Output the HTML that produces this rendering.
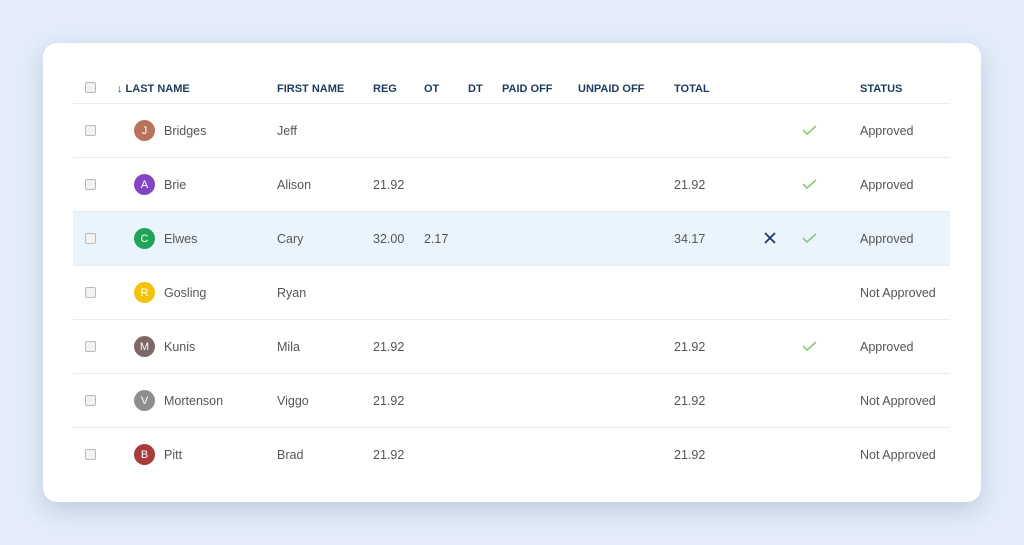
<!DOCTYPE html>
<html><head><meta charset="utf-8"><style>
body{margin:0;width:1024px;height:545px;background:#e4edf9;font-family:"Liberation Sans",sans-serif;position:relative;overflow:hidden}
.card{position:absolute;left:43px;top:43px;width:938px;height:459px;background:#fff;border-radius:14px;box-shadow:0 8px 24px rgba(120,140,170,.35)}
.a{position:absolute;white-space:nowrap}
.h{font-size:11px;font-weight:bold;color:#1d3a5f;top:83px}
.t{font-size:12.5px;color:#555;margin-top:1px}
.line{position:absolute;left:73px;width:877px;height:1px;background:#ebebeb}
.cb{position:absolute;left:85px;width:9px;height:9px;border:1px solid #bbb;border-radius:2px;background:#f2f2f2}
.av{position:absolute;left:134px;width:21px;height:21px;border-radius:50%;color:#fff;font-size:11px;text-align:center;line-height:23px}
</style></head><body>
<div class="card"></div>
<div class="a" style="left:73px;top:212px;width:877px;height:53px;background:#e9f4fd"></div>
<div class="cb" style="top:82px"></div>
<div class="a h" style="left:117px">↓ LAST NAME</div>
<div class="a h" style="left:277px">FIRST NAME</div>
<div class="a h" style="left:373px">REG</div>
<div class="a h" style="left:424px">OT</div>
<div class="a h" style="left:468px">DT</div>
<div class="a h" style="left:502px">PAID OFF</div>
<div class="a h" style="left:578px">UNPAID OFF</div>
<div class="a h" style="left:674px">TOTAL</div>
<div class="a h" style="left:860px">STATUS</div>
<div class="line" style="top:103px"></div><div class="line" style="top:157px"></div><div class="line" style="top:211px"></div><div class="line" style="top:265px"></div><div class="line" style="top:319px"></div><div class="line" style="top:373px"></div><div class="line" style="top:427px"></div>

<div class="cb" style="top:125px"></div><div class="av" style="top:120px;background:#b8735a">J</div><div class="a t" style="left:164px;top:123px">Bridges</div><div class="a t" style="left:277px;top:123px">Jeff</div><div class="a t" style="left:860px;top:123px">Approved</div>
<div class="cb" style="top:179px"></div><div class="av" style="top:174px;background:#8246c4">A</div><div class="a t" style="left:164px;top:177px">Brie</div><div class="a t" style="left:277px;top:177px">Alison</div><div class="a t" style="left:373px;top:177px">21.92</div><div class="a t" style="left:674px;top:177px">21.92</div><div class="a t" style="left:860px;top:177px">Approved</div>
<div class="cb" style="top:233px"></div><div class="av" style="top:228px;background:#22a35a">C</div><div class="a t" style="left:164px;top:231px">Elwes</div><div class="a t" style="left:277px;top:231px">Cary</div><div class="a t" style="left:373px;top:231px">32.00</div><div class="a t" style="left:424px;top:231px">2.17</div><div class="a t" style="left:674px;top:231px">34.17</div><div class="a t" style="left:860px;top:231px">Approved</div>
<div class="cb" style="top:287px"></div><div class="av" style="top:282px;background:#f4c20d">R</div><div class="a t" style="left:164px;top:285px">Gosling</div><div class="a t" style="left:277px;top:285px">Ryan</div><div class="a t" style="left:860px;top:285px">Not Approved</div>
<div class="cb" style="top:341px"></div><div class="av" style="top:336px;background:#7d6767">M</div><div class="a t" style="left:164px;top:339px">Kunis</div><div class="a t" style="left:277px;top:339px">Mila</div><div class="a t" style="left:373px;top:339px">21.92</div><div class="a t" style="left:674px;top:339px">21.92</div><div class="a t" style="left:860px;top:339px">Approved</div>
<div class="cb" style="top:395px"></div><div class="av" style="top:390px;background:#8e8e8e">V</div><div class="a t" style="left:164px;top:393px">Mortenson</div><div class="a t" style="left:277px;top:393px">Viggo</div><div class="a t" style="left:373px;top:393px">21.92</div><div class="a t" style="left:674px;top:393px">21.92</div><div class="a t" style="left:860px;top:393px">Not Approved</div>
<div class="cb" style="top:449px"></div><div class="av" style="top:444px;background:#a53d3a">B</div><div class="a t" style="left:164px;top:447px">Pitt</div><div class="a t" style="left:277px;top:447px">Brad</div><div class="a t" style="left:373px;top:447px">21.92</div><div class="a t" style="left:674px;top:447px">21.92</div><div class="a t" style="left:860px;top:447px">Not Approved</div>

<svg class="a" style="left:0;top:0" width="1024" height="545">
<g fill="none" stroke="#8cc97a" stroke-width="1.6">
<path d="M803 130l4 4 9-8"/><path d="M803 184l4 4 9-8"/><path d="M803 238l4 4 9-8"/><path d="M803 346l4 4 9-8"/>
</g>
<path d="M765 233l10 10M775 233l-10 10" stroke="#1d3a5f" stroke-width="1.8"/>
</svg>
</body></html>
